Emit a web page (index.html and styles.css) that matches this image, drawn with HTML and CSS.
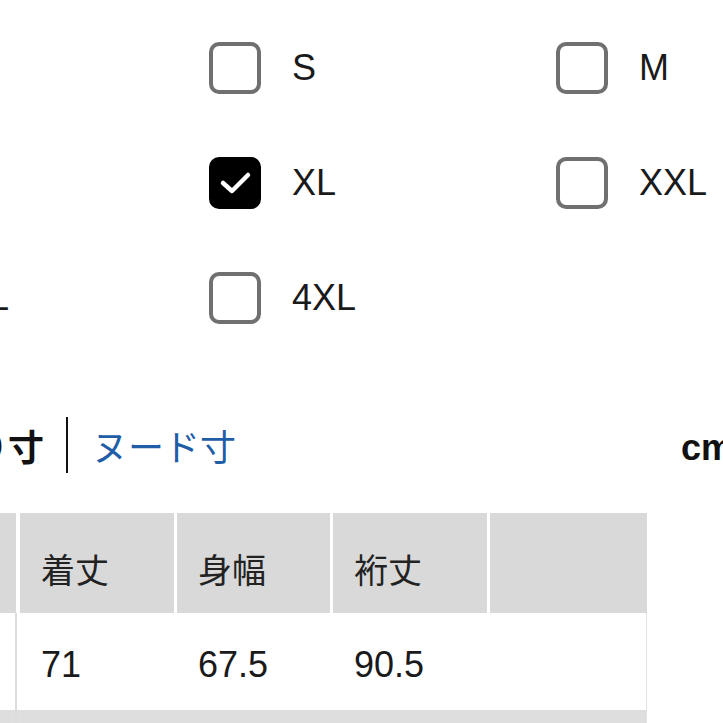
FILE: index.html
```html
<!DOCTYPE html>
<html lang="ja">
<head>
    <meta charset="UTF-8">
    <meta name="viewport" content="width=device-width, initial-scale=1.0">
    <title>サイズ</title>
    <link rel="stylesheet" href="styles.css">
</head>
<body>
    <div class="page">
        <!-- Size filter -->
        <div class="size-filter">
            <label class="size-option"><span class="box"></span><span class="size-name">XS</span></label>
            <label class="size-option"><span class="box"></span><span class="size-name">S</span></label>
            <label class="size-option"><span class="box"></span><span class="size-name">M</span></label>
            <label class="size-option"><span class="box"></span><span class="size-name">L</span></label>
            <label class="size-option">
                <span class="box checked">
                    <svg viewBox="0 0 52 52" width="52" height="52"><path d="M14 26 L23 34 L39 18" fill="none" stroke="#fff" stroke-width="4.5" stroke-linecap="round" stroke-linejoin="round"/></svg>
                </span>
                <span class="size-name">XL</span>
            </label>
            <label class="size-option"><span class="box"></span><span class="size-name">XXL</span></label>
            <label class="size-option"><span class="box"></span><span class="size-name">3XL</span></label>
            <label class="size-option"><span class="box"></span><span class="size-name">4XL</span></label>
        </div>

        <!-- Measurement tabs -->
        <div class="measure-tabs">
            <span class="tab active">仕上がり寸</span>
            <span class="divider"></span>
            <span class="tab link">ヌード寸</span>
            <span class="unit">cm</span>
        </div>

        <!-- Size table -->
        <table class="size-table">
            <colgroup>
                <col style="width: 152px">
                <col style="width: 157px">
                <col style="width: 156px">
                <col style="width: 157px">
                <col style="width: 160px">
            </colgroup>
            <thead>
                <tr>
                    <th>サイズ</th>
                    <th>着丈</th>
                    <th>身幅</th>
                    <th>裄丈</th>
                    <th></th>
                </tr>
            </thead>
            <tbody>
                <tr>
                    <td>XL</td>
                    <td>71</td>
                    <td>67.5</td>
                    <td>90.5</td>
                    <td></td>
                </tr>
                <tr class="striped">
                    <td></td>
                    <td></td>
                    <td></td>
                    <td></td>
                    <td></td>
                </tr>
            </tbody>
        </table>
    </div>
</body>
</html>
```

FILE: styles.css
```css
body {
    margin: 0;
    padding: 0;
    background-color: #fff;
    color: #1a1a1a;
    font-family: "Liberation Sans", "Noto Sans CJK JP", sans-serif;
    overflow: hidden;
}
.page {
    width: 870px;
    margin-left: -135px;
}
.size-filter {
    display: grid;
    grid-template-columns: repeat(3, 347px);
    grid-auto-rows: 115px;
    padding-top: 10px;
    margin-left: -3px;
}
.size-option {
    display: flex;
    align-items: center;
}
.box {
    box-sizing: border-box;
    width: 52px;
    height: 52px;
    border: 4px solid #707070;
    border-radius: 10px;
    background-color: #fff;
    flex-shrink: 0;
}
.box.checked {
    background-color: #000;
    border-color: #000;
    position: relative;
}
.box.checked svg {
    position: absolute;
    top: -4px;
    left: -4px;
}
.size-name {
    margin-left: 31px;
    font-size: 36px;
    color: #1a1a1a;
}
.measure-tabs {
    display: flex;
    align-items: center;
    height: 56px;
    margin-top: 62px;
    margin-left: -1px;
}
.tab {
    font-family: "Noto Sans CJK JP", sans-serif;
    font-size: 36px;
}
.tab.active {
    font-weight: 600;
    color: #111;
}
.tab.link {
    color: #1f5ea6;
}
.divider {
    width: 2px;
    height: 56px;
    background-color: #111;
    margin: 0 24px 0 22px;
}
.unit {
    margin-left: auto;
    margin-right: 2px;
    font-size: 36px;
    font-weight: bold;
    color: #111;
    padding-top: 6px;
}
.size-table {
    margin-top: 40px;
    width: 782px;
    table-layout: fixed;
    border-collapse: separate;
    border-spacing: 0;
}
.size-table th {
    height: 90px;
    padding: 10px 0 0 21px;
    background-color: #d9d9d9;
    border-left: 3px solid #fff;
    text-align: left;
    font-family: "Noto Sans CJK JP", sans-serif;
    font-weight: normal;
    font-size: 34px;
    color: #222;
}
.size-table th:first-child {
    border-left: 0;
    border-right: 1px solid #fff;
}
.size-table td {
    height: 91px;
    padding: 6px 0 0 21px;
    background-color: #fff;
    border-left: 3px solid #fff;
    font-size: 36px;
    color: #1a1a1a;
}
.size-table td:first-child {
    border-left: 0;
    border-right: 2px solid #dcdcdc;
}
.size-table td:last-child {
    border-right: 1px solid #e2e2e2;
}
.size-table .striped td {
    background-color: #dedede;
    border-left-color: #dedede;
}
```
